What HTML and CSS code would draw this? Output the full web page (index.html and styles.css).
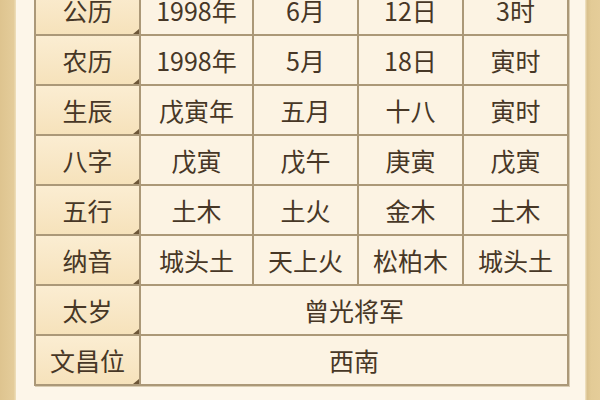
FILE: index.html
```html
<!DOCTYPE html>
<html lang="zh">
<head>
<meta charset="utf-8">
<link rel="stylesheet" href="styles.css">
</head>
<body>
<div class="page">
  <div class="strip strip-left"></div>
  <div class="panel">
    <div class="grid">
      <div class="cell head">公历</div>
      <div class="cell">1998年</div>
      <div class="cell">6月</div>
      <div class="cell">12日</div>
      <div class="cell">3时</div>

      <div class="cell head">农历</div>
      <div class="cell">1998年</div>
      <div class="cell">5月</div>
      <div class="cell">18日</div>
      <div class="cell">寅时</div>

      <div class="cell head">生辰</div>
      <div class="cell">戊寅年</div>
      <div class="cell">五月</div>
      <div class="cell">十八</div>
      <div class="cell">寅时</div>

      <div class="cell head">八字</div>
      <div class="cell">戊寅</div>
      <div class="cell">戊午</div>
      <div class="cell">庚寅</div>
      <div class="cell">戊寅</div>

      <div class="cell head">五行</div>
      <div class="cell">土木</div>
      <div class="cell">土火</div>
      <div class="cell">金木</div>
      <div class="cell">土木</div>

      <div class="cell head">纳音</div>
      <div class="cell">城头土</div>
      <div class="cell">天上火</div>
      <div class="cell">松柏木</div>
      <div class="cell">城头土</div>

      <div class="cell head">太岁</div>
      <div class="cell wide">曾光将军</div>

      <div class="cell head">文昌位</div>
      <div class="cell wide">西南</div>
    </div>
  </div>
  <div class="strip strip-right"></div>
</div>
</body>
</html>
```

FILE: styles.css
```css
html, body {
  margin: 0;
  padding: 0;
}
body {
  width: 600px;
  height: 400px;
  overflow: hidden;
  background: #e2c993;
  font-family: "Noto Sans CJK SC", "Noto Sans", sans-serif;
}
.page {
  display: flex;
  height: 400px;
}
.strip {
  width: 16px;
  flex: none;
}
.strip-left {
  background: linear-gradient(to right, #dec48f, #e4cc9a 85%, #efe0bd);
}
.strip-right {
  width: 15px;
  background: linear-gradient(to right, #f3e6c8, #d9c08c 15%, #e3cb96 40%, #e5cd99);
}
.panel {
  flex: 1;
  background: #fdf6e9;
  padding: 0 15px 0 18px;
  overflow: hidden;
}
.grid {
  margin-top: -16px;
  display: grid;
  grid-template-columns: 103px 111px 103px 103px 103px;
  grid-auto-rows: 48px;
  gap: 2px;
  padding: 2px;
  background: #ab9878;
  width: max-content;
  box-shadow: 1px 1px 0 #d9ccb2;
}
.cell {
  background: #fcf3e3;
  color: #473726;
  font-size: 25px;
  line-height: 48px;
  text-align: center;
  white-space: nowrap;
}
.head {
  position: relative;
  background: linear-gradient(to bottom, #fbedd2, #f6e2bb);
}
.head::after {
  content: "";
  position: absolute;
  right: 0;
  bottom: 0;
  width: 6px;
  height: 5px;
  background: #6e5738;
  clip-path: polygon(100% 0, 100% 100%, 0 100%);
}
.wide {
  grid-column: span 4;
  background: #fcf3e3;
}
```
